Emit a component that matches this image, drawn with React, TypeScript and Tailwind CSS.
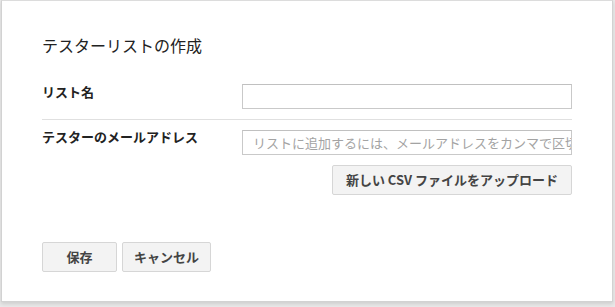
export default function App() {
  return (
    <div
      className="w-[615px] h-[307px] bg-[#e9e9e9] pl-px overflow-hidden"
      style={{ fontFamily: '"Noto Sans CJK JP", "Noto Sans", sans-serif' }}
    >
      <div className="w-[612px] h-[302px] bg-white border border-[#d2d2d2] border-t-[#dcdcdc] shadow-[0_2px_4px_rgba(0,0,0,0.12)] pl-[40px] pr-[39px] pt-[34px]">
        {/* Title */}
        <h1 className="text-[16px] leading-5 text-[#222]">テスターリストの作成</h1>

        {/* List name */}
        <div className="flex mt-[29px]">
          <label className="w-[200px] text-[13px] leading-4 font-bold text-[#222]">
            リスト名
          </label>
          <input
            type="text"
            className="w-[330px] h-[25px] border border-[#c9c9c9] border-t-[#c0c0c0] bg-white outline-none px-[10px] text-[13px]"
          />
        </div>

        <div className="h-px bg-[#e0e0e0] mt-[10px] w-[530px]" />

        {/* Emails */}
        <div className="flex mt-[10px]">
          <label className="w-[200px] text-[13px] leading-4 font-bold text-[#222] -mt-px">
            テスターのメールアドレス
          </label>
          <div className="w-[330px] flex flex-col items-end">
            <input
              type="text"
              placeholder="リストに追加するには、メールアドレスをカンマで区切って入力"
              className="w-[330px] h-[25px] border border-[#c9c9c9] border-t-[#c0c0c0] bg-white outline-none pl-[10px] pr-0 text-[13px] placeholder:text-[#a3a3a3]"
            />
            <button className="mt-[10px] w-[240px] h-[30px] bg-[#f3f3f3] border border-[#d6d6d6] rounded-[2px] text-[13px] font-bold text-[#444]">
              新しい CSV ファイルをアップロード
            </button>
          </div>
        </div>

        {/* Footer */}
        <div className="flex gap-[5px] mt-[47px]">
          <button className="w-[75px] h-[30px] bg-[#f3f3f3] border border-[#d6d6d6] rounded-[2px] text-[13px] font-bold text-[#444]">
            保存
          </button>
          <button className="w-[89px] h-[30px] bg-[#f3f3f3] border border-[#d6d6d6] rounded-[2px] text-[13px] font-bold text-[#444]">
            キャンセル
          </button>
        </div>
      </div>
    </div>
  );
}
